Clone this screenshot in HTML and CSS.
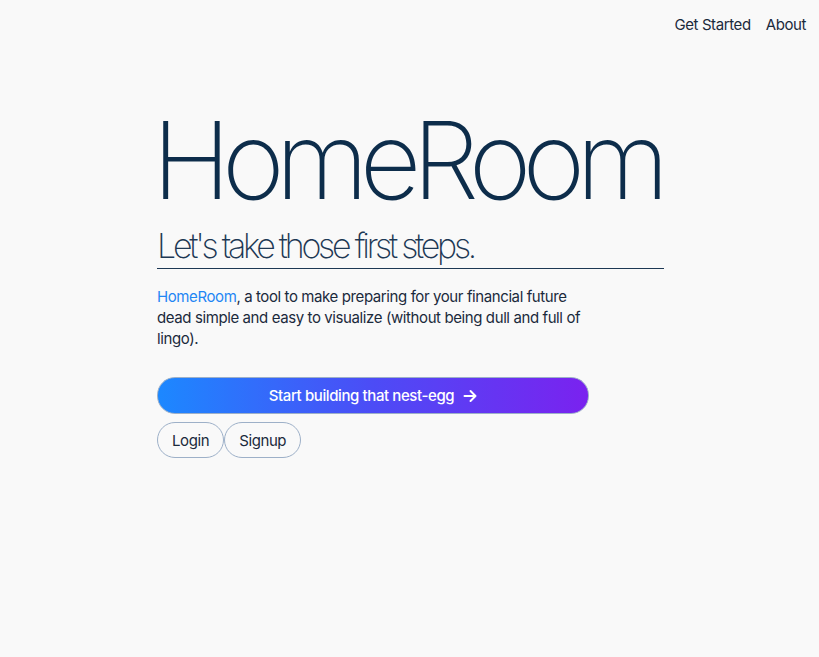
FILE: index.html
```html
<!DOCTYPE html>
<html lang="en">
<head>
<meta charset="utf-8">
<title>HomeRoom</title>
<link rel="stylesheet" href="styles.css">
</head>
<body>
<header class="nav">
  <a class="nav-link" href="#">Get Started</a>
  <a class="nav-link" href="#">About</a>
</header>
<main class="hero">
  <h1 class="title">HomeRoom</h1>
  <h2 class="subtitle">Let's take those first steps.</h2>
  <p class="intro"><a class="brand-link" href="#">HomeRoom</a>, a tool to make preparing for your financial future dead simple and easy to visualize (without being dull and full of lingo).</p>
  <div class="actions">
    <a class="cta" href="#">Start building that nest-egg
      <svg class="arrow" width="14" height="14" viewBox="0 0 14 14" fill="none" stroke="currentColor" stroke-width="2" stroke-linecap="round" stroke-linejoin="round"><path d="M1.5 7h11M7.5 2l5 5-5 5"/></svg>
    </a>
    <div class="secondary">
      <a class="pill" href="#">Login</a>
      <a class="pill" href="#">Signup</a>
    </div>
  </div>
</main>
</body>
</html>
```

FILE: styles.css
```css
html, body {
  margin: 0;
  padding: 0;
  background: #f9f9f9;
}
body {
  font-family: Inter, "Noto Sans", sans-serif;
  color: #1b2a3c;
  min-height: 657px;
}
a { text-decoration: none; }

.nav {
  display: flex;
  justify-content: flex-end;
  gap: 15px;
  padding: 16px 13px 0 0;
  font-size: 15px;
  line-height: 18px;
  letter-spacing: -0.4px;
}
.nav-link { color: #1b2a3c; }

.hero {
  width: 507px;
  margin: 0 auto;
  padding-top: 73px;
  position: relative;
  left: 1px;
}
.title {
  margin: 0 0 0 -5px;
  font-size: 107px;
  font-weight: 200;
  letter-spacing: -9px;
  line-height: 1;
  color: #0d2d4b;
}
.subtitle {
  margin: 10px 0 0;
  font-size: 34px;
  font-weight: 200;
  letter-spacing: -3.25px;
  line-height: 44px;
  color: #1d3854;
  border-bottom: 1px solid #1d3854;
}
.intro {
  margin: 17px 0 0;
  width: 440px;
  font-size: 15px;
  line-height: 21px;
  letter-spacing: -0.4px;
  color: #1b2a3c;
}
.brand-link { color: #1f86f4; }

.actions {
  margin-top: 28px;
  width: 432px;
}
.cta {
  display: flex;
  align-items: center;
  justify-content: center;
  gap: 9px;
  height: 35px;
  border: 1px solid #9db0c8;
  border-radius: 18px;
  background: linear-gradient(90deg, #1c88ff 0%, #4c4cf6 50%, #7a22ef 100%);
  color: #fff;
  font-size: 15px;
  font-weight: 500;
  letter-spacing: -0.4px;
}
.secondary {
  display: flex;
  margin-top: 8px;
}
.pill {
  display: inline-flex;
  align-items: center;
  height: 34px;
  padding: 0 14px;
  border: 1px solid #9db0c8;
  border-radius: 18px;
  color: #1b2a3c;
  font-size: 15px;
  letter-spacing: -0.4px;
}
```
